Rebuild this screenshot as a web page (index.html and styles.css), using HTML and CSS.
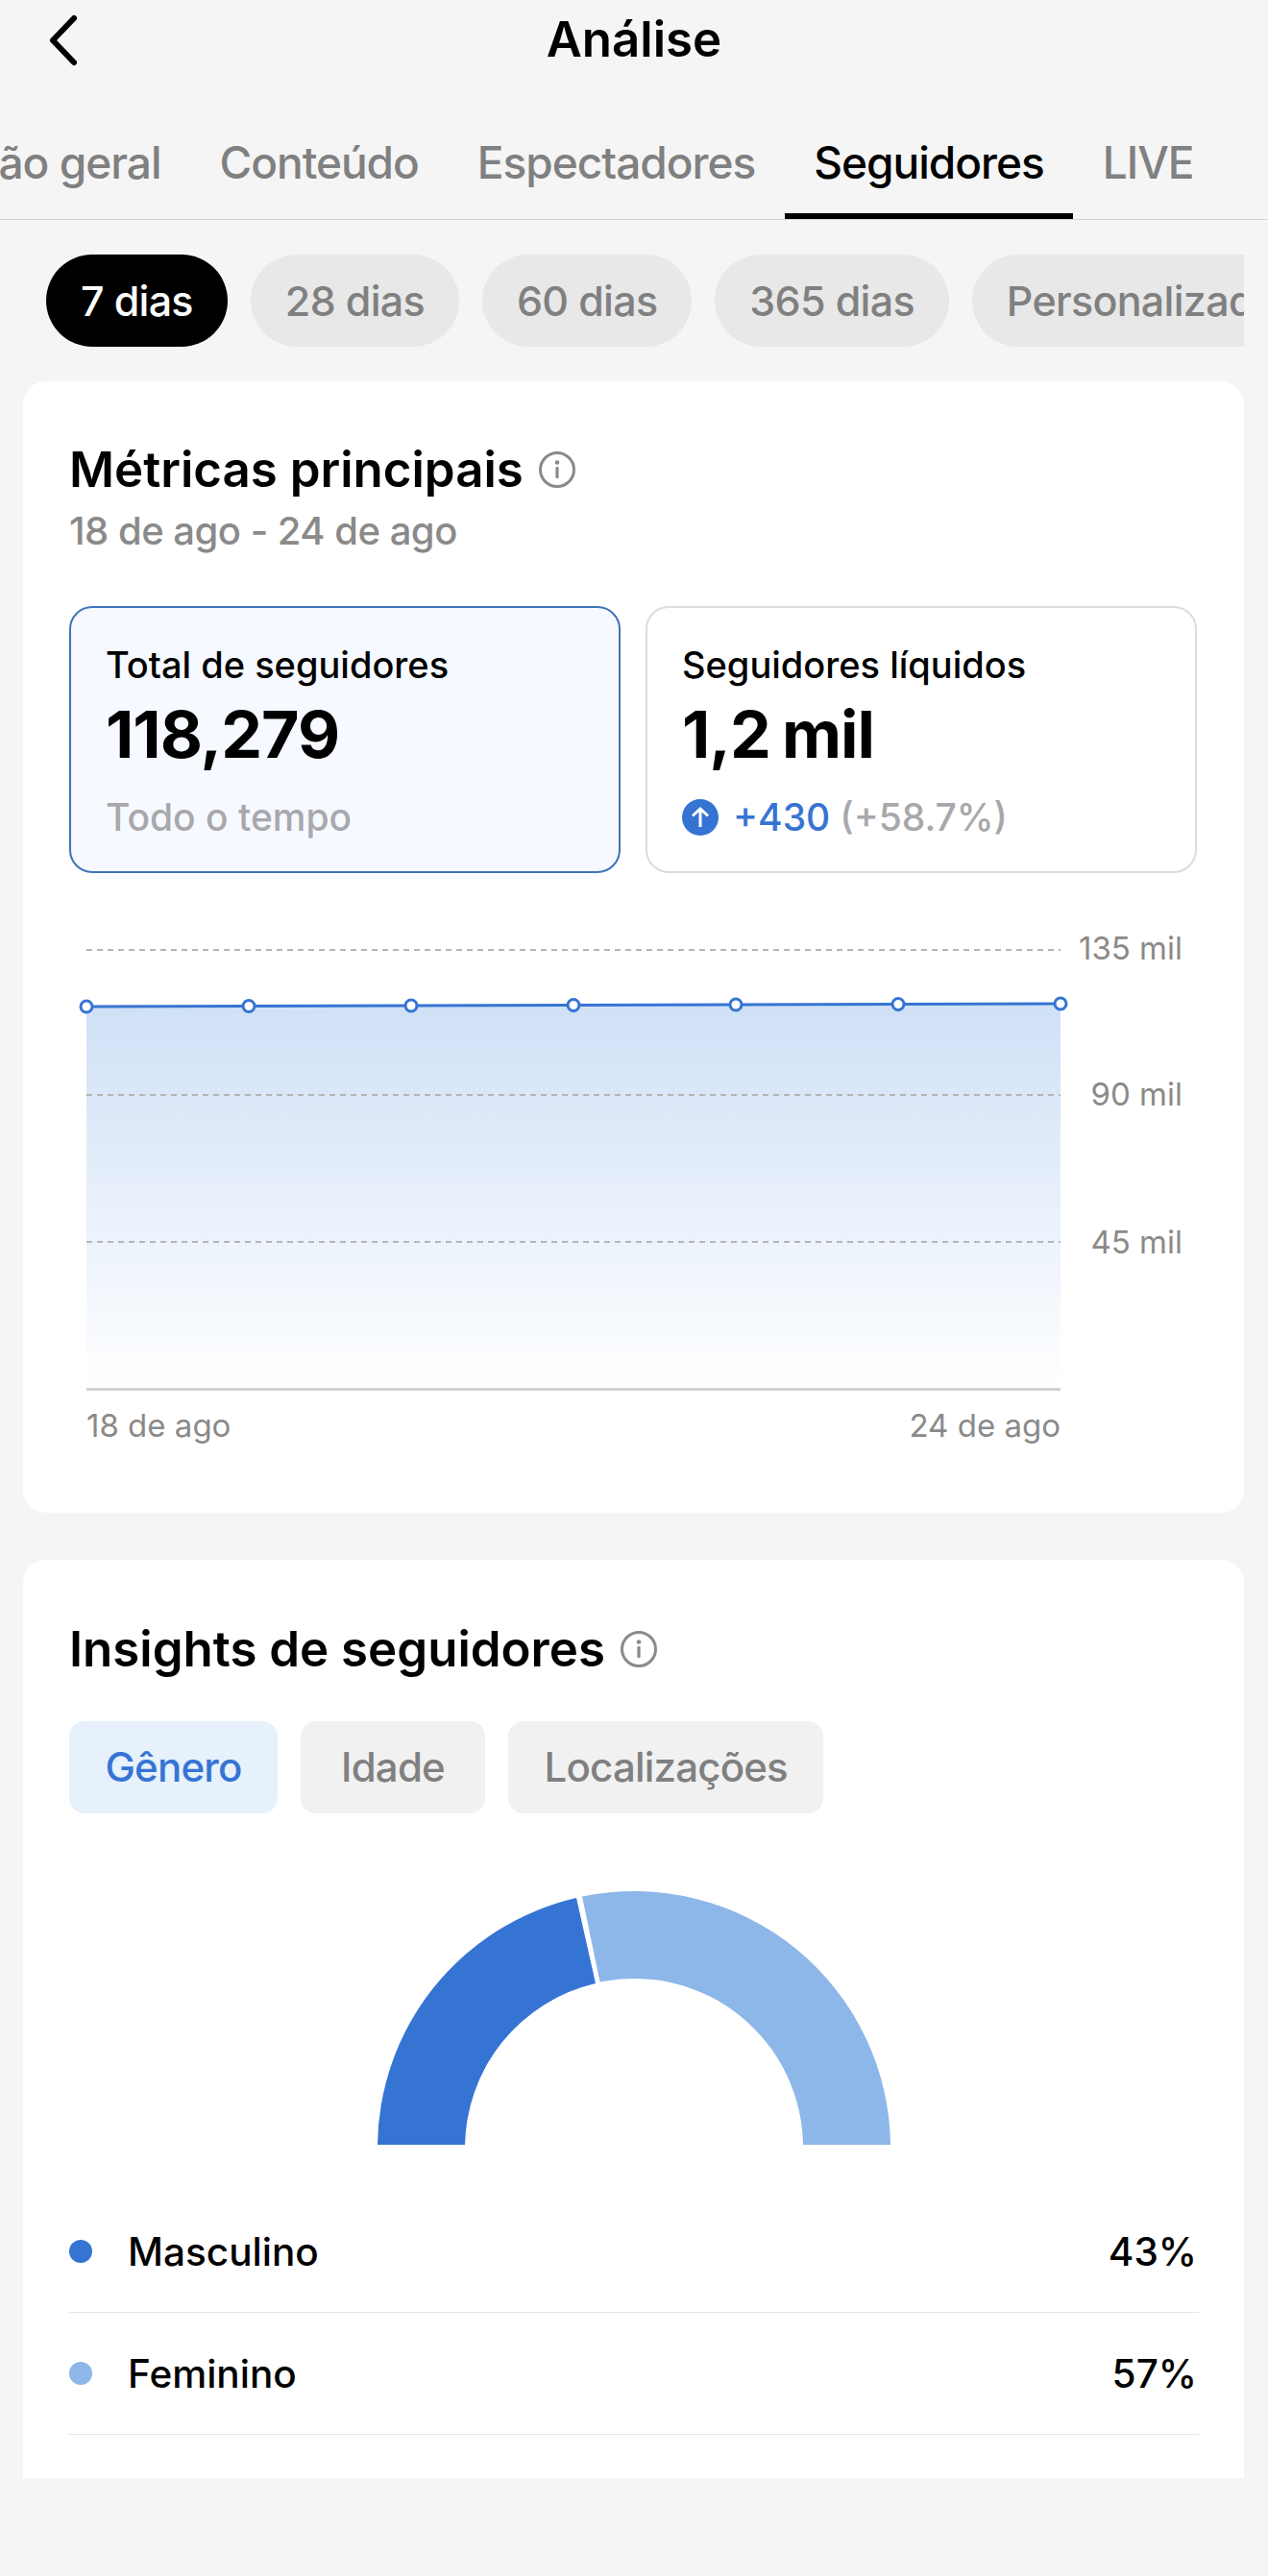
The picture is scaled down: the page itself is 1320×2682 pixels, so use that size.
FILE: index.html
```html
<!DOCTYPE html>
<html lang="pt">
<head>
<meta charset="utf-8">
<title>Análise</title>
<link rel="stylesheet" href="styles.css">
</head>
<body>
<main class="page">
  <header class="header">
    <svg class="back" width="44" height="60" viewBox="0 0 44 60"><path d="M30 7 L8 30 L30 53" fill="none" stroke="#000" stroke-width="6" stroke-linecap="round" stroke-linejoin="round"/></svg>
    <h1 class="page-title">Análise</h1>
  </header>
  <nav class="tabs">
    <div class="tabs-row">
      <span class="tab">Visão geral</span>
      <span class="tab">Conteúdo</span>
      <span class="tab">Espectadores</span>
      <span class="tab tab-active">Seguidores</span>
      <span class="tab">LIVE</span>
    </div>
  </nav>
  <div class="pills">
    <span class="pill pill-active">7 dias</span>
    <span class="pill">28 dias</span>
    <span class="pill">60 dias</span>
    <span class="pill">365 dias</span>
    <span class="pill">Personalizado</span>
  </div>

  <section class="card card-metrics">
    <div class="card-title-row">
      <h2 class="card-title">Métricas principais</h2>
      <svg class="info" width="40" height="40" viewBox="0 0 40 40"><circle cx="20" cy="20" r="17.5" fill="none" stroke="#8a8a8a" stroke-width="3"/><circle cx="20" cy="12.5" r="2.3" fill="#8a8a8a"/><rect x="18.4" y="17" width="3.2" height="12" rx="1" fill="#8a8a8a"/></svg>
    </div>
    <p class="date-range">18 de ago - 24 de ago</p>
    <div class="metrics">
      <div class="metric metric-active">
        <div class="metric-label">Total de seguidores</div>
        <div class="metric-value">118,279</div>
        <div class="metric-sub">Todo o tempo</div>
      </div>
      <div class="metric">
        <div class="metric-label">Seguidores líquidos</div>
        <div class="metric-value">1,2 mil</div>
        <div class="metric-sub">
          <svg class="up" width="38" height="38" viewBox="0 0 38 38"><circle cx="19" cy="19" r="19" fill="#3674d3"/><path d="M19 29 V10 M11 17.5 L19 10 L27 17.5" fill="none" stroke="#fff" stroke-width="3"/></svg>
          <span class="delta">+430</span>
          <span>(+58.7%)</span>
        </div>
      </div>
    </div>
    <svg class="chart" width="1247" height="560" viewBox="24 960 1247 560">
      <defs>
        <linearGradient id="area" x1="0" y1="0" x2="0" y2="1">
          <stop offset="0" stop-color="#cfe0f6"/>
          <stop offset="1" stop-color="#ffffff"/>
        </linearGradient>
      </defs>
      <path d="M90 1048 L1104 1045 V1446 H90 Z" fill="url(#area)"/>
      <path class="grid" d="M90 989 H1104 M90 1140 H1104 M90 1293 H1104"/>
      <path d="M90 1446.5 H1104" stroke="#d2d2d2" stroke-width="3"/>
      <path d="M90 1048 L1104 1045" stroke="#3674d3" stroke-width="3" fill="none"/>
      <g class="dots">
        <circle cx="90" cy="1048" r="6"/><circle cx="259" cy="1047.5" r="6"/><circle cx="428" cy="1047" r="6"/><circle cx="597" cy="1046.5" r="6"/><circle cx="766" cy="1046" r="6"/><circle cx="935" cy="1045.5" r="6"/><circle cx="1104" cy="1045" r="6"/>
      </g>
      <g class="axis">
        <text x="1231" y="990" class="end" dominant-baseline="middle">135 mil</text>
        <text x="1231" y="1142" class="end" dominant-baseline="middle">90 mil</text>
        <text x="1231" y="1296" class="end" dominant-baseline="middle">45 mil</text>
        <text x="90" y="1487" dominant-baseline="middle">18 de ago</text>
        <text x="1104" y="1487" class="end" dominant-baseline="middle">24 de ago</text>
      </g>
    </svg>
  </section>

  <section class="card card-insights">
    <div class="card-title-row">
      <h2 class="card-title">Insights de seguidores</h2>
      <svg class="info" width="40" height="40" viewBox="0 0 40 40"><circle cx="20" cy="20" r="17.5" fill="none" stroke="#8a8a8a" stroke-width="3"/><circle cx="20" cy="12.5" r="2.3" fill="#8a8a8a"/><rect x="18.4" y="17" width="3.2" height="12" rx="1" fill="#8a8a8a"/></svg>
    </div>
    <div class="segments">
      <span class="segment segment-active">Gênero</span>
      <span class="segment">Idade</span>
      <span class="segment">Localizações</span>
    </div>
    <svg class="donut" width="534" height="265" viewBox="393 1968 534 265">
      <path d="M393 2233 V2236 A267 267 0 0 1 600 1976 L620 2065 A176 176 0 0 0 484 2236 V2233 Z" fill="#3674d3"/>
      <path d="M606 1974.5 A267 267 0 0 1 927 2236 V2233 H836 V2236 A176 176 0 0 0 624.5 2063.5 Z" fill="#8db7e8"/>
    </svg>
    <ul class="legend">
      <li class="legend-row"><span class="dot dot-male"></span><span class="legend-name">Masculino</span><span class="legend-value">43%</span></li>
      <li class="legend-row"><span class="dot dot-female"></span><span class="legend-name">Feminino</span><span class="legend-value">57%</span></li>
    </ul>
  </section>
</main>
</body>
</html>
```
FILE: styles.css
```css
* { box-sizing: border-box; }
html, body { margin: 0; padding: 0; }
body {
  background: #f5f5f5;
  font-family: Inter, "Liberation Sans", sans-serif;
  color: #000;
  width: 1320px;
  height: 2682px;
  overflow: hidden;
}
.page { display: flex; flex-direction: column; }
.header {
  height: 82px;
  display: flex;
  align-items: center;
  justify-content: center;
  position: relative;
}
.back { position: absolute; left: 47px; top: 12px; }
.page-title { margin: 0; font-size: 51px; line-height: 60px; font-weight: 600; }
.tabs {
  margin-top: 28px;
  height: 119px;
  border-bottom: 1px solid #d6d6d6;
  overflow: hidden;
}
.tabs-row { display: flex; margin-left: -98px; height: 118px; }
.tab {
  padding: 0 30.5px;
  font-size: 46px;
  line-height: 118px;
  font-weight: 500;
  letter-spacing: -1px;
  color: #808080;
  white-space: nowrap;
  position: relative;
}
.tab-active { color: #000; }
.tab-active::after {
  content: "";
  position: absolute;
  left: 0; right: 0; bottom: 0;
  height: 6px;
  background: #000;
}
.pills {
  display: flex;
  gap: 24px;
  margin: 36px 0 0 48px;
  width: 1247px;
  height: 96px;
  overflow: hidden;
}
.pill {
  flex: none;
  height: 96px;
  padding: 0 36px;
  border-radius: 48px;
  background: #e8e8e8;
  color: #808080;
  font-size: 43px;
  line-height: 96px;
  font-weight: 500;
  letter-spacing: -0.7px;
  white-space: nowrap;
}
.pill-active { background: #000; color: #fff; }
.card {
  margin: 0 25px 0 24px;
  background: #fff;
}
.card-metrics {
  margin-top: 36px;
  height: 1178px;
  border-radius: 24px;
  padding: 64px 48px 0;
  position: relative;
}
.card-insights {
  margin-top: 49px;
  height: 956px;
  border-radius: 24px 24px 0 0;
  padding: 65px 48px 0;
}
.card-title-row { display: flex; align-items: center; gap: 15px; height: 56px; }
.card-title { margin: 0; font-size: 51px; line-height: 56px; font-weight: 600; white-space: nowrap; }
.date-range { margin: 12px 0 0; font-size: 40px; line-height: 48px; font-weight: 500; letter-spacing: -0.5px; color: #8a8a8a; }
.metrics { display: flex; gap: 26px; margin-top: 54px; width: 1174px; }
.metric {
  flex: 1;
  height: 278px;
  border: 2px solid #dcdcdc;
  border-radius: 24px;
  padding: 35px 36px 0;
}
.metric-active { background: #f6f9ff; border-color: #3f74b8; }
.metric-label { font-size: 38px; line-height: 48px; font-weight: 500; }
.metric-value { margin-top: 8px; font-size: 68px; line-height: 80px; font-weight: 700; letter-spacing: -1px; word-spacing: -3px; }
.metric-sub {
  display: flex;
  align-items: center;
  gap: 10px;
  margin-top: 22px;
  font-size: 39px;
  line-height: 50px;
  font-weight: 500;
  color: #a8a8ac;
}
.up { margin-right: 5px; }
.delta { color: #3674d3; }
.chart { display: block; position: absolute; left: 0; top: 563px; }
.grid { stroke: #b5b5b5; stroke-width: 2; stroke-dasharray: 6 5; fill: none; }
.dots circle { fill: #fff; stroke: #3674d3; stroke-width: 3; }
.axis text { font-family: Inter, "Liberation Sans", sans-serif; font-size: 33px; fill: #8a8a8a; }
.axis .end { text-anchor: end; }
.segments { display: flex; gap: 24px; margin-top: 47px; }
.segment {
  min-width: 192px;
  height: 96px;
  padding: 0 37.5px;
  border-radius: 16px;
  background: #f1f1f1;
  color: #808080;
  font-size: 42px;
  line-height: 96px;
  font-weight: 500;
  letter-spacing: -0.8px;
  text-align: center;
}
.segment-active { background: #e6f1fb; color: #3674d3; }
.donut { display: block; margin: 80px 0 0 321px; }
.legend { list-style: none; margin: 48px 0 0; padding: 0; width: 1176px; }
.legend-row {
  display: flex;
  align-items: center;
  height: 127px;
  border-bottom: 1px solid #e6e6e6;
  font-size: 40.5px;
  font-weight: 500;
}
.dot { width: 24px; height: 24px; border-radius: 50%; margin-right: 37px; }
.dot-male { background: #3674d3; }
.dot-female { background: #8db7e8; }
.legend-name { flex: 1; }
.legend-value { padding-right: 2px; }
```
